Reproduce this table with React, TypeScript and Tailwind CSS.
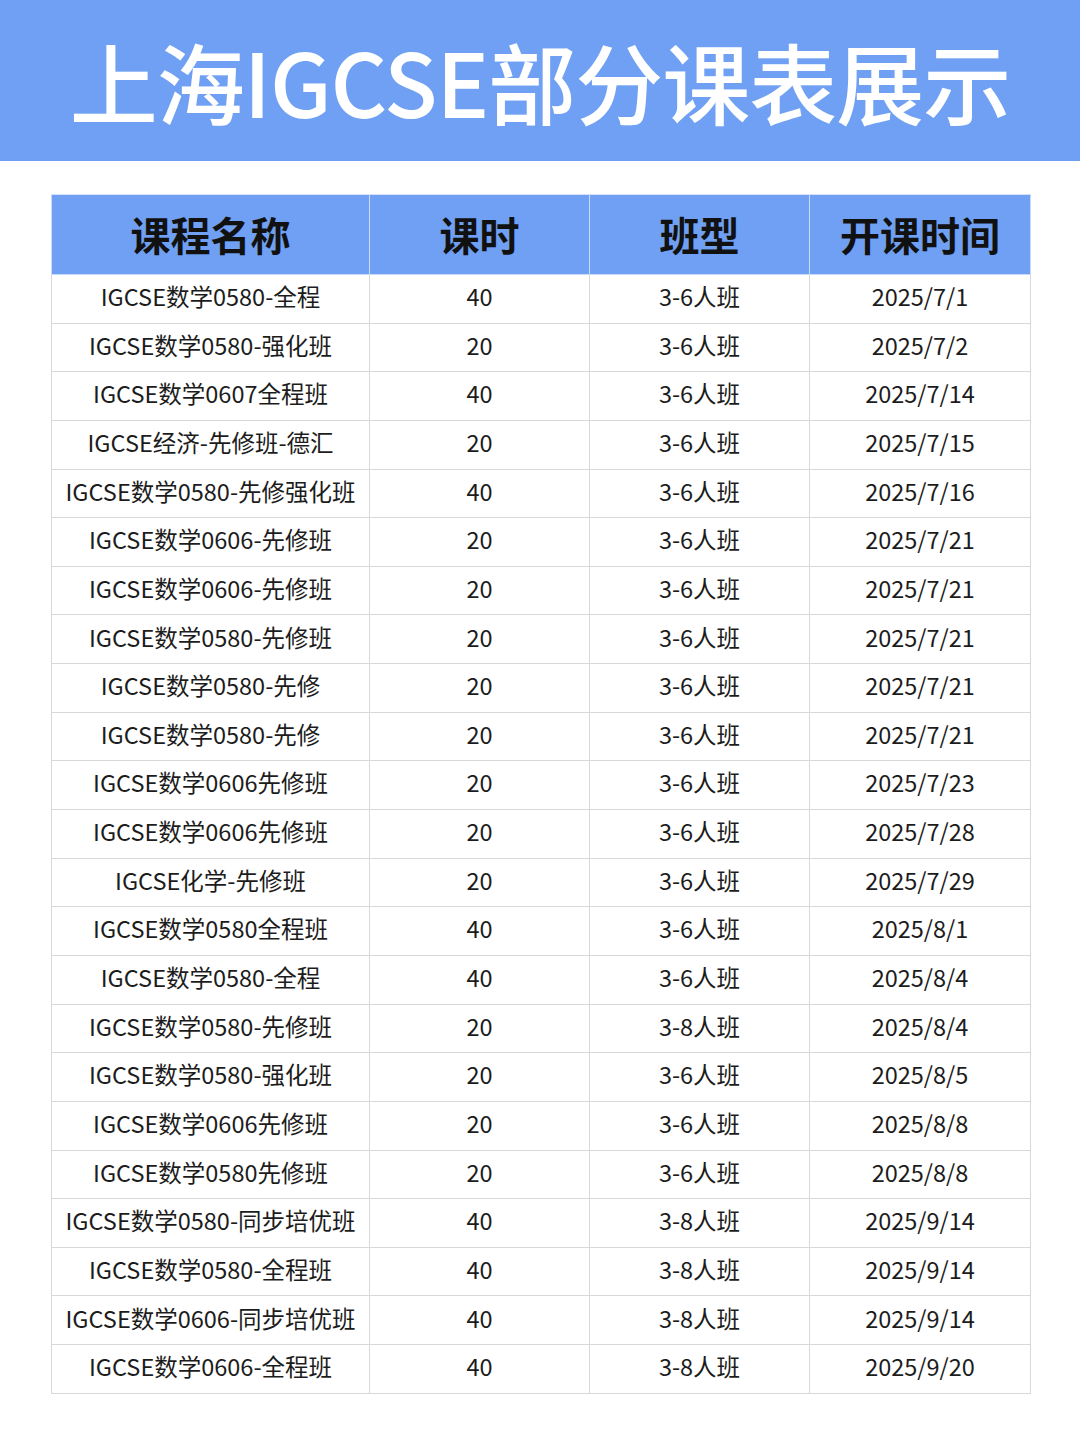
import React from "react";

const rows: [string, string, string, string][] = [
  ["IGCSE数学0580-全程", "40", "3-6人班", "2025/7/1"],
  ["IGCSE数学0580-强化班", "20", "3-6人班", "2025/7/2"],
  ["IGCSE数学0607全程班", "40", "3-6人班", "2025/7/14"],
  ["IGCSE经济-先修班-德汇", "20", "3-6人班", "2025/7/15"],
  ["IGCSE数学0580-先修强化班", "40", "3-6人班", "2025/7/16"],
  ["IGCSE数学0606-先修班", "20", "3-6人班", "2025/7/21"],
  ["IGCSE数学0606-先修班", "20", "3-6人班", "2025/7/21"],
  ["IGCSE数学0580-先修班", "20", "3-6人班", "2025/7/21"],
  ["IGCSE数学0580-先修", "20", "3-6人班", "2025/7/21"],
  ["IGCSE数学0580-先修", "20", "3-6人班", "2025/7/21"],
  ["IGCSE数学0606先修班", "20", "3-6人班", "2025/7/23"],
  ["IGCSE数学0606先修班", "20", "3-6人班", "2025/7/28"],
  ["IGCSE化学-先修班", "20", "3-6人班", "2025/7/29"],
  ["IGCSE数学0580全程班", "40", "3-6人班", "2025/8/1"],
  ["IGCSE数学0580-全程", "40", "3-6人班", "2025/8/4"],
  ["IGCSE数学0580-先修班", "20", "3-8人班", "2025/8/4"],
  ["IGCSE数学0580-强化班", "20", "3-6人班", "2025/8/5"],
  ["IGCSE数学0606先修班", "20", "3-6人班", "2025/8/8"],
  ["IGCSE数学0580先修班", "20", "3-6人班", "2025/8/8"],
  ["IGCSE数学0580-同步培优班", "40", "3-8人班", "2025/9/14"],
  ["IGCSE数学0580-全程班", "40", "3-8人班", "2025/9/14"],
  ["IGCSE数学0606-同步培优班", "40", "3-8人班", "2025/9/14"],
  ["IGCSE数学0606-全程班", "40", "3-8人班", "2025/9/20"],
];

const font = { fontFamily: '"Noto Sans CJK SC", "Noto Sans", sans-serif' };

export default function App() {
  return (
    <div className="w-[1080px] h-[1443px] bg-white" style={font}>
      <div className="h-[161px] bg-[#6fa0f3] flex items-center justify-center">
        <h1 className="text-white text-[88px] font-medium leading-none tracking-[-1px] pb-[2px]">
          上海IGCSE部分课表展示
        </h1>
      </div>
      <div className="pt-[33px] pl-[51px]">
        <table className="border-collapse w-[979px] table-fixed">
          <colgroup>
            <col className="w-[318px]" />
            <col className="w-[220px]" />
            <col className="w-[220px]" />
            <col className="w-[221px]" />
          </colgroup>
          <thead>
            <tr className="h-[80px] bg-[#6fa0f3]">
              {["课程名称", "课时", "班型", "开课时间"].map((h, i) => (
                <th
                  key={i}
                  className="border border-[#c9dafa] border-t-[#d6e2f7] text-[#111] text-[40px] font-bold leading-none text-center p-0 pb-[2px]"
                >
                  {h}
                </th>
              ))}
            </tr>
          </thead>
          <tbody>
            {rows.map((r, i) => (
              <tr key={i} className="h-[48.65px]">
                {r.map((c, j) => (
                  <td
                    key={j}
                    className="border border-[#d8d8d8] text-[#1c1c1c] text-[23.5px] leading-none text-center p-0 pb-[4px] whitespace-nowrap"
                  >
                    {c}
                  </td>
                ))}
              </tr>
            ))}
          </tbody>
        </table>
      </div>
    </div>
  );
}
